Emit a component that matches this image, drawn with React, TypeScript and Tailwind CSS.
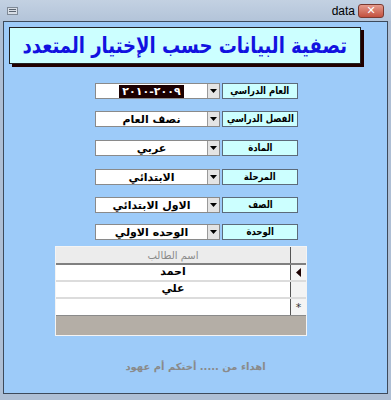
import React from "react";

const rows = [
  { label: "العام الدراسي", value: "٢٠٠٩-٢٠١٠", sel: true, mt: "mt-[19px]" },
  { label: "الفصل الدراسي", value: "نصف العام", mt: "mt-[12px]" },
  { label: "المادة", value: "عربي", mt: "mt-[13px]" },
  { label: "المرحلة", value: "الابتدائي", mt: "mt-[13px]" },
  { label: "الصف", value: "الاول الابتدائي", mt: "mt-[12px]" },
  { label: "الوحدة", value: "الوحده الاولي", mt: "mt-[11px]" },
];

function Arrow() {
  return (
    <svg width="7" height="4" viewBox="0 0 7 4">
      <polygon points="0,0 7,0 3.5,4" fill="#000" />
    </svg>
  );
}

export default function App() {
  const ar = { fontFamily: '"DejaVu Sans", "Liberation Sans", sans-serif' };
  return (
    <div className="w-[391px] h-[400px] bg-[#aebfd5] flex flex-col overflow-hidden" style={ar}>
      {/* title bar */}
      <div className="h-[21px] flex items-center px-[7px] bg-gradient-to-b from-[#c3d1e2] to-[#b3c4d9]">
        <div className="w-[11px] h-[8px] bg-[#d8dee6] border border-[#7f8a97] flex flex-col justify-center gap-[1px] px-[1px]">
          <div className="h-[1px] bg-[#5a6470]" />
          <div className="h-[1px] bg-[#5a6470]" />
        </div>
        <div className="flex-1" />
        <span className="text-[12px] text-black mr-[3px] leading-none" style={{ fontFamily: '"Liberation Sans", sans-serif' }}>data</span>
        <div className="w-[26px] h-[14px] rounded-[3px] border border-[#7a3a30] bg-gradient-to-b from-[#e59b8c] to-[#c2503e] flex items-center justify-center text-white text-[11px] font-bold leading-none">
          ✕
        </div>
      </div>
      {/* client area */}
      <div className="mx-[3px] h-[373px] bg-[#9dcbf9] border border-[#3d4a5b] flex flex-col">
        {/* banner */}
        <div className="ml-[5px] mt-[5px] w-[352px] h-[37px] bg-[#ccffff] border border-[#222] shadow-[3px_3px_0_#200000] flex items-center justify-center overflow-visible">
          <span dir="rtl" className="inline-block whitespace-nowrap text-[#1212e0] font-bold text-[22px] leading-none scale-x-[0.82]">
            تصفية البيانات حسب الإختيار المتعدد
          </span>
        </div>
        {/* rows */}
        {rows.map((r, i) => (
          <div key={i} className={`${r.mt} ml-[91px] flex items-stretch h-[16px]`}>
            <div className="w-[125px] flex bg-white border border-[#8a8a8a]">
              <div className="flex-1 flex items-center justify-center text-[11px] font-bold text-black leading-none whitespace-nowrap">
                {r.sel ? (
                  <span dir="ltr" className="bg-[#1c0000] text-white px-[3px] h-[13px] flex items-center tracking-[2px]">
                    {r.value}
                  </span>
                ) : (
                  <span dir="rtl">{r.value}</span>
                )}
              </div>
              <div className="w-[12px] bg-[#e4e4e4] border-l border-[#9a9a9a] flex items-center justify-center">
                <Arrow />
              </div>
            </div>
            <div className="ml-[2px] w-[76px] bg-[#ccffff] border border-[#5c6b7a] flex items-center justify-center">
              <span dir="rtl" className="inline-block text-[10px] font-bold text-black leading-none whitespace-nowrap scale-x-[0.85]">{r.label}</span>
            </div>
          </div>
        ))}
        {/* datasheet */}
        <div className="mt-[6px] ml-[51px] w-[252px] h-[90px] bg-white border border-[#f4f4f4] flex flex-col">
          <div className="h-[18px] flex bg-[#ececec] border-b-2 border-[#808080]">
            <div className="flex-1 flex items-center justify-center text-[10px] text-[#8a8a8a]" dir="rtl">اسم الطالب</div>
            <div className="w-[16px] border-l border-[#555]" />
          </div>
          <div className="h-[17px] flex border-b-2 border-[#dcdcdc]">
            <div className="flex-1 flex items-center justify-center text-[11px] font-bold text-black" dir="rtl">احمد</div>
            <div className="w-[16px] border-l border-[#555] bg-[#f4f4f4] flex items-center justify-center">
              <svg width="5" height="9" viewBox="0 0 5 9"><polygon points="5,0 5,9 0,4.5" fill="#1c0000" /></svg>
            </div>
          </div>
          <div className="h-[17px] flex border-b-2 border-[#dcdcdc]">
            <div className="flex-1 flex items-center justify-center text-[11px] font-bold text-black" dir="rtl">علي</div>
            <div className="w-[16px] border-l border-[#555] bg-[#f4f4f4]" />
          </div>
          <div className="h-[17px] flex border-b border-[#8a8a8a]">
            <div className="flex-1" />
            <div className="w-[16px] border-l border-[#555] bg-[#f4f4f4] flex items-center justify-center text-[11px] text-[#333] leading-none">*</div>
          </div>
          <div className="flex-1 bg-[#b4aea6]" />
        </div>
        {/* footer */}
        <div className="mt-[26px] flex justify-center">
          <span dir="rtl" className="text-[10px] font-bold text-[#8a8a8a] leading-none">
            اهداء من ..... أختكم أم عهود
          </span>
        </div>
      </div>
    </div>
  );
}
